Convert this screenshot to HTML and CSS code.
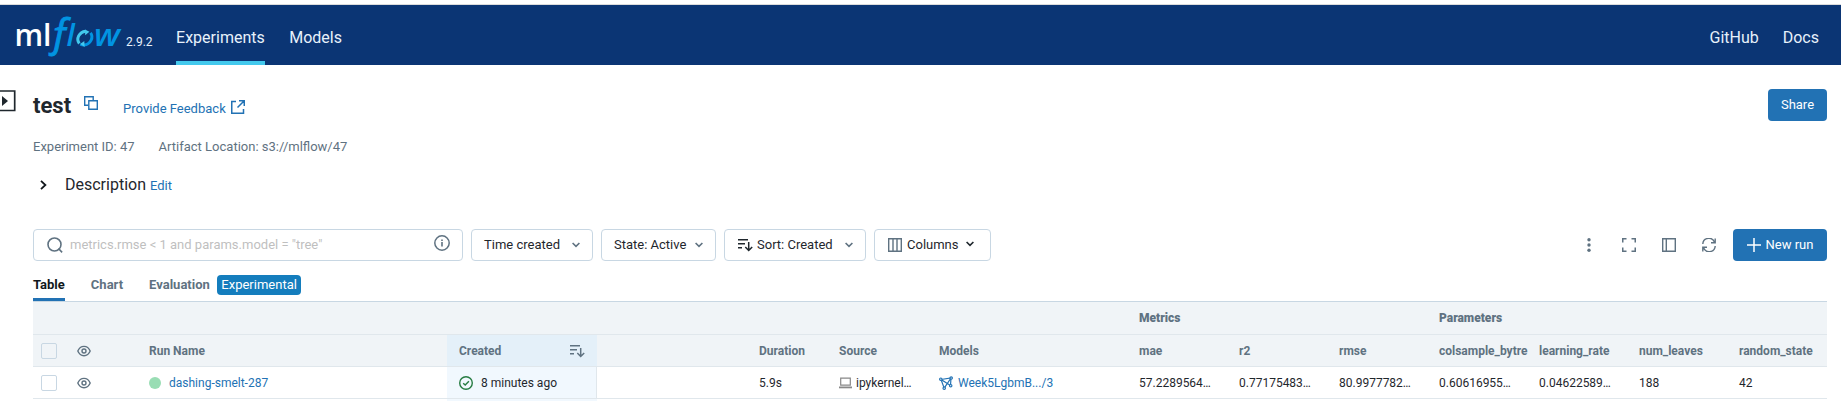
FILE: index.html
```html
<!DOCTYPE html>
<html lang="en">
<head>
<meta charset="utf-8">
<title>test - MLflow</title>
<link rel="stylesheet" href="styles.css">
</head>
<body>
<svg width="0" height="0" class="defs">
  <symbol id="eye" viewBox="0 0 14 12"><path d="M.8 6C2 3 4.300 1.300 7 1.300S12 3 13.200 6C12 9 9.700 10.700 7 10.700S2 9 .8 6z" fill="none" stroke="currentColor" stroke-width="1.350"/><circle cx="7" cy="6" r="2" fill="none" stroke="currentColor" stroke-width="1.400"/></symbol>
  <symbol id="sort" viewBox="0 0 15 14"><path d="M0 1.700h10M0 5.700h7M0 9.700h4M10.700 4v8.300M7.300 9l3.400 3.500L14.200 9" fill="none" stroke="currentColor" stroke-width="1.500"/></symbol>
  <symbol id="chev" viewBox="0 0 8 6"><path d="M.6 1l3.400 3.400L7.400 1" fill="none" stroke="currentColor" stroke-width="1.600"/></symbol>
</svg>
<header class="nav">
  <svg class="logo" width="106" height="60" viewBox="0 0 106 60">
    <text class="logo-ml" x="-1.500" y="41" textLength="37" lengthAdjust="spacingAndGlyphs">ml</text>
    <text class="logo-f" x="33" y="40.500" textLength="22" lengthAdjust="spacingAndGlyphs">ƒ</text>
    <text class="logo-l" x="50.500" y="41">l</text>
    <path d="M63.300 38.500c-3.500-4.500-.3-11.500 6.300-12.300" class="ring light"/>
    <path d="M74.500 27.800c3.500 4.500 0 11.700-6.500 12.200-1.300 0-2.500-.3-3.700-.9" class="ring"/>
    <path d="M69 24.400l4.400 2.300-4.200 3.500zM68.600 42l-4.300-3 4-3z" class="tip"/>
    <text class="logo-w" x="78" y="41" textLength="26" lengthAdjust="spacingAndGlyphs">w</text>
  </svg>
  <span class="version">2.9.2</span>
  <nav class="links"><a class="active">Experiments</a><a>Models</a></nav>
  <nav class="links right"><a>GitHub</a><a>Docs</a></nav>
</header>
<svg class="expander" width="16" height="22" viewBox="0 0 16 22"><path d="M0 1h14.700v19.500H0" fill="none" stroke="#1f272d" stroke-width="1.700"/><path d="M2 6l6 5-6 5z" fill="#1f272d"/></svg>
<main class="page">
  <div class="heading">
    <h1>test</h1>
    <svg class="copy" width="14" height="14" viewBox="0 0 14 14" fill="none" stroke="#2272b4" stroke-width="1.400"><path d="M4.300 9.200H.7V.7h8.500v3.600"/><path d="M4.800 4.800h8.500v8.500H4.800z"/></svg>
    <a class="feedback">Provide Feedback</a>
    <svg class="ext" width="14" height="14" viewBox="0 0 14 14" fill="none" stroke="#2272b4" stroke-width="1.500"><path d="M5 1.500H.75v11.700H12.500V9M8 .75h5.250V6M13 1L6.500 7.500"/></svg>
    <button class="primary share">Share</button>
  </div>
  <div class="meta"><span>Experiment ID: 47</span><span>Artifact Location: s3://mlflow/47</span></div>
  <div class="description">
    <svg width="7" height="10" viewBox="0 0 7 10"><path d="M1 .8L5.400 5 1 9.200" fill="none" stroke="#11171c" stroke-width="1.800"/></svg>
    <span>Description</span><a>Edit</a>
  </div>
  <div class="toolbar">
    <div class="box search">
      <svg width="16" height="16" viewBox="0 0 16 16" fill="none" stroke="#5f7281" stroke-width="1.600"><circle cx="7.500" cy="7.500" r="6.500"/><path d="M11.500 11.500l3.600 3.900"/></svg>
      <span>metrics.rmse &lt; 1 and params.model = "tree"</span>
      <svg class="info" width="16" height="16" viewBox="0 0 16 16"><circle cx="8" cy="8" r="7.200" fill="none" stroke="#5f7281" stroke-width="1.500"/><path d="M7.200 4.500h1.600v1.600H7.200zM7.200 7h1.600v4.500H7.200z" fill="#5f7281"/></svg>
    </div>
    <div class="box time"><span>Time created</span><svg class="chev"><use href="#chev"/></svg></div>
    <div class="box state"><span>State: Active</span><svg class="chev"><use href="#chev"/></svg></div>
    <div class="box sorting"><svg class="sort"><use href="#sort"/></svg><span>Sort: Created</span><svg class="chev"><use href="#chev"/></svg></div>
    <div class="box columns"><svg width="14" height="14" viewBox="0 0 14 14" fill="none" stroke="#5f7281" stroke-width="1.400"><path d="M.7.7h12.600v12.600H.7zM5 1v12M9 1v12"/></svg><span>Columns</span><svg class="chev"><use href="#chev"/></svg></div>
    <div class="actions">
      <svg width="14" height="14" viewBox="0 0 14 14" fill="#5f7281"><circle cx="7" cy="1.700" r="1.700"/><circle cx="7" cy="7" r="1.700"/><circle cx="7" cy="12.300" r="1.700"/></svg>
      <svg width="14" height="14" viewBox="0 0 14 14" fill="none" stroke="#5f7281" stroke-width="1.500"><path d="M.75 4.500V.75H4.500M9.500.75h3.750V4.500M13.250 9.500v3.750H9.500M4.500 13.250H.75V9.500"/></svg>
      <svg width="14" height="14" viewBox="0 0 14 14" fill="none" stroke="#5f7281" stroke-width="1.400"><path d="M.7.7h12.600v12.600H.7zM4.300 1v12"/></svg>
      <svg width="14" height="14" viewBox="0 0 14 14" fill="none" stroke="#5f7281" stroke-width="1.400"><path d="M.8 6A6 6 0 0 1 12.500 4.500M13.200 8A6 6 0 0 1 1.500 9.500M13.200.5v4.300H9M.8 13.500V9.200H5"/></svg>
    </div>
    <button class="primary new"><svg width="14" height="14" viewBox="0 0 14 14"><path d="M7 0v14M0 7h14" stroke="#fff" stroke-width="1.500"/></svg>New run</button>
  </div>
  <div class="tabs"><span class="tab selected">Table</span><span class="tab">Chart</span><span class="tab">Evaluation</span><span class="badge">Experimental</span></div>
  <div class="grid">
    <div class="row group"><b class="metrics">Metrics</b><b class="params">Parameters</b></div>
    <div class="row head">
      <div class="cell pick"><i class="check"></i><svg class="eye"><use href="#eye"/></svg></div>
      <div class="cell">Run Name</div>
      <div class="cell created">Created<svg class="sort"><use href="#sort"/></svg></div>
      <div class="cell"></div>
      <div class="cell">Duration</div><div class="cell">Source</div><div class="cell">Models</div>
      <div class="cell">mae</div><div class="cell">r2</div><div class="cell">rmse</div>
      <div class="cell">colsample_bytre</div><div class="cell">learning_rate</div><div class="cell">num_leaves</div><div class="cell">random_state</div>
    </div>
    <div class="row data">
      <div class="cell pick"><i class="check"></i><svg class="eye"><use href="#eye"/></svg></div>
      <div class="cell"><i class="dot"></i><a>dashing-smelt-287</a></div>
      <div class="cell created"><svg class="ok" width="14" height="14" viewBox="0 0 14 14" fill="none" stroke="#277c43" stroke-width="1.400"><circle cx="7" cy="7" r="6.300"/><path d="M4.200 7.200l2 1.900 3.700-3.900"/></svg>8 minutes ago</div>
      <div class="cell"></div>
      <div class="cell">5.9s</div>
      <div class="cell"><svg class="laptop" width="13" height="12" viewBox="0 0 13 12"><path d="M1.700 1.200h9.600v7H1.700z" fill="none" stroke="#888" stroke-width="1.200"/><path d="M0 9.500h13v1.800H0z" fill="#888"/></svg>ipykernel…</div>
      <div class="cell"><svg class="model" width="14" height="14" viewBox="0 0 14 14" fill="none" stroke="#2272b4" stroke-width="1.200"><path d="M2 3.500L12 2l-.5 7.500L2 3.500l3.200 8.700L12 2"/><g fill="#fff"><circle cx="1.800" cy="3.200" r="1.200"/><circle cx="12.200" cy="2" r="1.200"/><circle cx="11.700" cy="9.700" r="1.200"/><circle cx="5.200" cy="12.200" r="1.200"/></g></svg><a>Week5LgbmB.../3</a></div>
      <div class="cell">57.2289564…</div><div class="cell">0.77175483…</div><div class="cell">80.9977782…</div>
      <div class="cell">0.60616955…</div><div class="cell">0.04622589…</div><div class="cell">188</div><div class="cell">42</div>
    </div>
    <div class="tail"></div>
  </div>
</main>
</body>
</html>
```
FILE: styles.css
```css
* { box-sizing: border-box; }
body { margin: 0; padding-top: 4px; height: 401px; overflow: hidden; background: #fff; color: #1f272d; font: 13px/20px Roboto, "Liberation Sans", sans-serif; }
svg { display: block; flex: none; }
.defs { position: absolute; }
a { color: #2272b4; }
.nav { height: 61px; border-top: 1px solid #dcdcdc; background: #0b3574; display: flex; padding: 0 22px 0 16px; }
.logo { overflow: visible; }
.logo text { font-family: "Open Sans", sans-serif; }
.logo-ml { font-size: 30px; font-weight: 600; fill: #fff; }
.logo .logo-f { font: italic 41px "Open Sans", sans-serif; fill: #0194e2; stroke: #0194e2; stroke-width: .9px; }
.logo-l, .logo-w { font-size: 30px; font-weight: 600; font-style: italic; fill: #0194e2; }
.ring { fill: none; stroke: #0194e2; stroke-width: 3px; }
.ring.light { stroke: #43c9ed; }
.tip { fill: #43c9ed; }
.version { color: #e7f1fb; font-size: 12px; margin: 27px 0 0 4px; }
.links { display: flex; gap: 24.500px; margin-left: 23.500px; font-size: 16px; line-height: 24px; }
.links a { color: #e7f1fb; height: 60px; padding-top: 21px; }
.links .active { border-bottom: 4px solid #43c9ed; }
.links.right { margin-left: auto; gap: 24px; }
.expander { position: absolute; left: 0; top: 90px; }
.page { padding: 24px 14px 0 33px; }
.heading { display: flex; height: 32px; }
h1 { margin: 3px 0 0; font-size: 22px; line-height: 28px; font-weight: 700; }
.copy { margin: 7px 0 0 13px; }
.feedback { margin: 10px 0 0 25px; }
.ext { margin: 11px 0 0 5px; }
.primary { border: 0; border-radius: 4px; background: #2272b4; color: #fff; height: 32px; font: 13px/20px Roboto, sans-serif; display: flex; align-items: center; justify-content: center; padding: 0; }
.share { width: 59px; margin-left: auto; }
.meta { display: flex; gap: 24px; margin-top: 16px; color: #5f7281; }
.description { display: flex; align-items: center; height: 24px; margin: 16px 0 32px 7px; }
.description span { font-size: 16px; margin: 0 4px 0 18px; }
.description a { padding-top: 2px; }
.toolbar { display: flex; gap: 8px; height: 32px; }
.box { border: 1px solid #c8d7e3; border-radius: 4px; height: 32px; display: flex; align-items: center; justify-content: space-between; padding: 0 12px; }
.search { width: 430px; color: #bfbfbf; justify-content: flex-start; gap: 7px; padding-left: 13px; }
.info { margin: -4px 0 0 auto; }
.time { width: 122px; }
.state { width: 115px; }
.sorting { width: 142px; padding-left: 13px; }
.sorting span { margin: 0 auto 0 4px; }
.columns { width: 117px; padding: 0 16px 0 13px; }
.columns span { margin: 0 auto 0 5px; }
.columns .chev { color: #1f272d; margin-top: -3px; }
.chev { width: 8px; height: 6px; color: #5f7281; }
.sort { width: 15px; height: 14px; }
.actions { display: flex; align-items: center; gap: 26px; margin: 0 9px 0 auto; }
.new { width: 94px; gap: 5px; }
.tabs { display: flex; height: 40px; color: #5f7281; font-weight: 700; }
.tab { margin-right: 26px; padding-top: 14px; }
.tab:nth-child(3) { margin-right: 7px; }
.selected { color: #11171c; border-bottom: 3px solid #2272b4; }
.badge { height: 20px; margin-top: 14px; padding: 0 4.500px; border-radius: 4px; background: #147dbd; color: #fff; font-weight: 400; }
.grid { border-top: 1px solid #c8d7e3; font-size: 12px; }
.row { display: grid; height: 32px; border-bottom: 1px solid #e0e7ec; grid-template-columns: 104px 310px 150px 150px 80px 100px 200px repeat(7, 100px); }
.group, .head { background: #f0f4f7; color: #5f7281; font-weight: 700; }
.group { height: 33px; align-items: center; }
.metrics { grid-column: 8; padding-left: 12px; }
.params { grid-column: 11; padding-left: 12px; }
.cell { display: flex; align-items: center; padding-left: 12px; white-space: nowrap; min-width: 0; }
.pick { padding-left: 8px; gap: 20px; color: #5f7281; }
.check { width: 16px; height: 16px; border: 1px solid #c8d7e3; border-radius: 2px; }
.eye { width: 14px; height: 12px; }
.head .created { background: #e4f0f9; justify-content: space-between; padding-right: 12px; }
.data .created { background: #f1f8fe; border-right: 1px solid #e0e7ec; }
.dot { width: 12px; height: 12px; border-radius: 50%; background: #99ddb4; margin-right: 8px; }
.ok { margin-right: 8px; }
.laptop { margin: 1px 4px 0 0; }
.model { margin-right: 5px; }
.tail { width: 150px; height: 2px; margin-left: 414px; background: #f1f8fe; }
```
